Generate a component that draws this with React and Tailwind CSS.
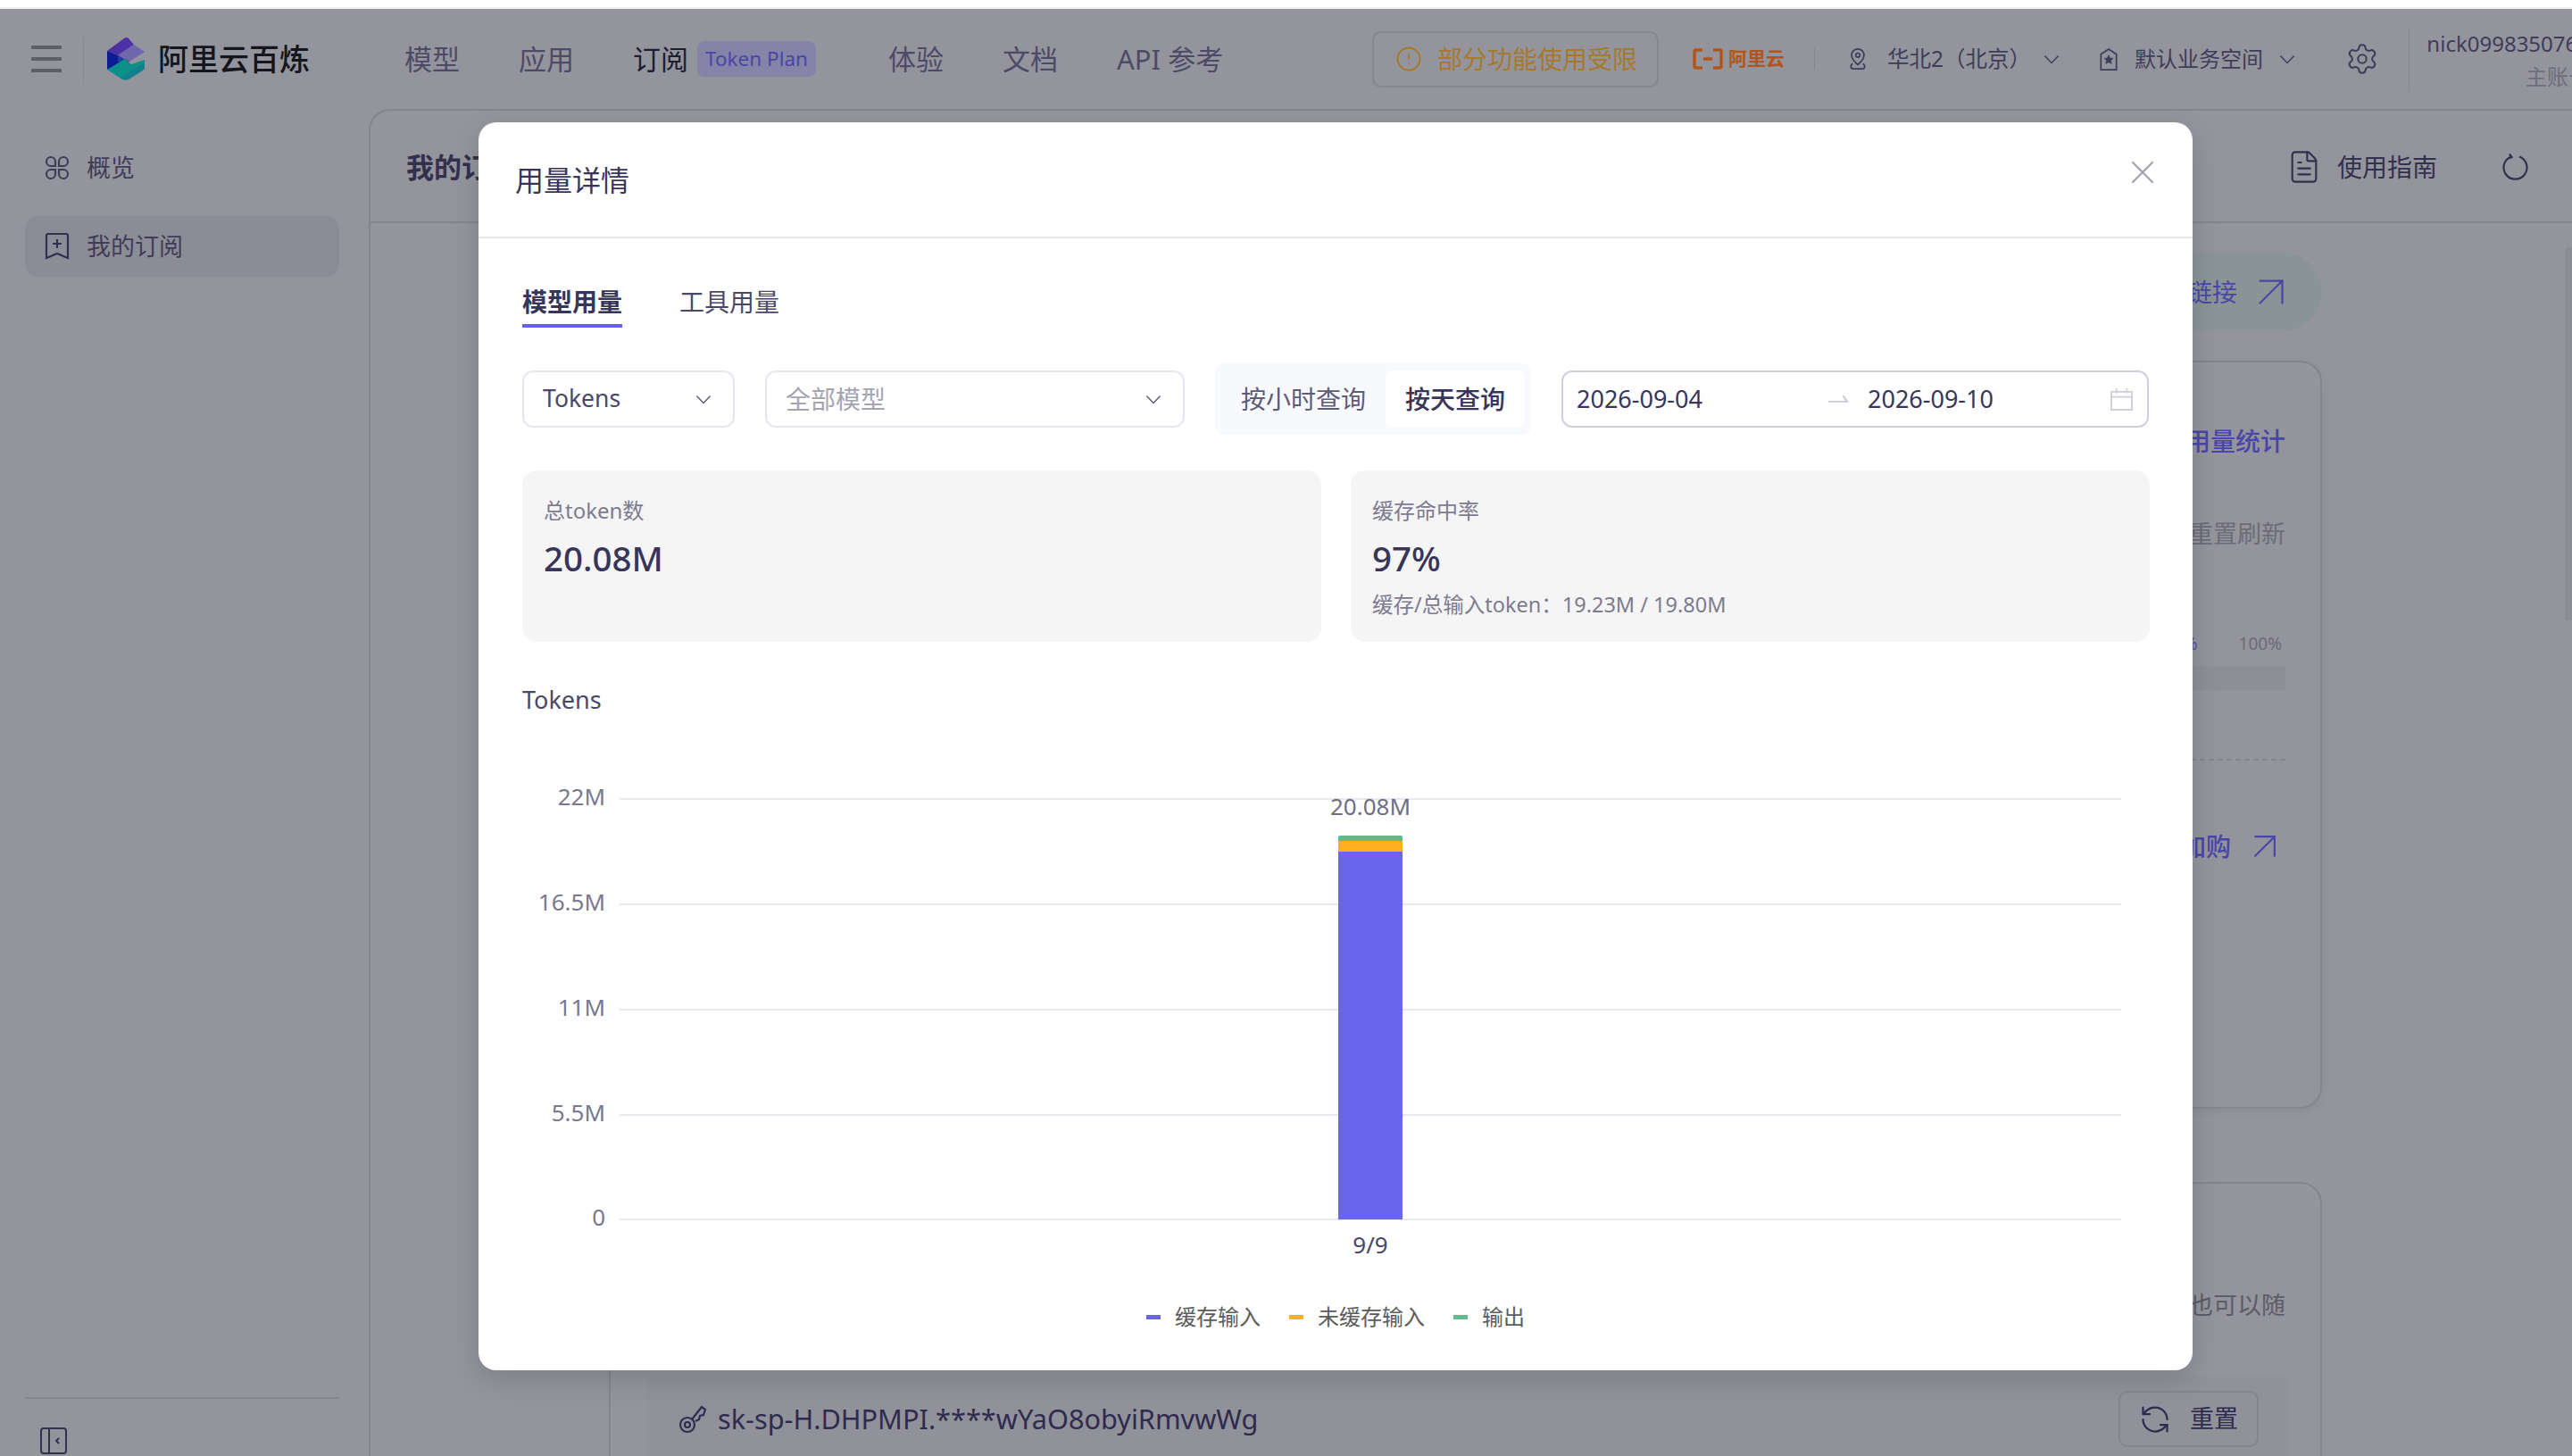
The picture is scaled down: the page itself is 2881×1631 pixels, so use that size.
import React from "react";
import { ArrowUpRight, CircleAlert, FileText, RefreshCcw, Settings, X } from "lucide-react";

const Chevron = ({ className }) => (
  <svg viewBox="0 0 20 12" fill="none" stroke="currentColor" strokeWidth="1.6" className={className}>
    <path d="M1.5 1.5 10 10.5l8.5-9" />
  </svg>
);

const LogoMark = () => (
  <svg viewBox="0 0 42 48" className="w-[42px] h-[48px] ml-[26px] shrink-0">
    <path d="M0 15 19 1c2-1.300 4-1.300 5 0l6 7-18 12z" fill="#4b31a3" />
    <path d="M12 20 30 8l12 8-17 11-7-3z" fill="#6f66ae" />
    <path d="M0 15l12 5 8 6-20 10z" fill="#0b1c94" />
    <path d="M12 20l13 7-5 3-8-3z" fill="#1f3fa0" />
    <path d="M0 36 20 24l7 6 15-5v9L22 47c-2 1-3 1-5 0z" fill="#0d8f8a" />
    <path d="M15 45 42 28v6c0 1-1 2-2 3L24 47c-3 1-6 0-9-2z" fill="#12808a" />
  </svg>
);

const OverviewIcon = () => (
  <svg viewBox="0 0 28 28" fill="none" stroke="#3f3c5a" strokeWidth="2.2" className="w-[28px] h-[28px] shrink-0">
    <path d="M12 12H7a5 5 0 1 1 5-5z" />
    <path d="M16 12h5a5 5 0 1 0-5-5z" />
    <path d="M12 16H7a5 5 0 1 0 5 5z" />
    <path d="M16 16h5a5 5 0 1 1-5 5z" />
  </svg>
);

const BookmarkIcon = () => (
  <svg viewBox="0 0 28 30" fill="none" stroke="#33304f" strokeWidth="2.2" className="w-[28px] h-[30px] shrink-0">
    <path d="M2 3a2 2 0 0 1 2-2h20a2 2 0 0 1 2 2v25l-12-5-12 5z" />
    <path d="M14 7v10M9 12h10" />
  </svg>
);

const CollapseIcon = () => (
  <svg viewBox="0 0 30 30" fill="none" stroke="#33304f" strokeWidth="2" className="w-[30px] h-[30px]">
    <rect x="1" y="1" width="28" height="28" rx="3" />
    <path d="M10 1v28" />
    <path d="M21 12l-3 3 3 3" />
  </svg>
);

const PinIcon = () => (
  <svg viewBox="0 0 22 28" fill="none" stroke="#3f3c5a" strokeWidth="1.8" className="w-[22px] h-[26px] shrink-0">
    <path d="M11 2a7.500 7.500 0 0 0-7.500 7.500C3.500 14 8 18.500 11 21c3-2.500 7.500-7 7.500-11.500A7.500 7.500 0 0 0 11 2z" />
    <circle cx="11" cy="9.500" r="2.500" />
    <path d="M5 20c-3 1-3.500 6 1 6h10c4.500 0 4-5 1-6" />
  </svg>
);

const SpaceIcon = () => (
  <svg viewBox="0 0 22 28" fill="none" stroke="#3f3c5a" strokeWidth="1.8" className="w-[22px] h-[27px] shrink-0">
    <path d="M11 2 2 8v18h18V8z" />
    <path d="m11 9 1.600 3.400 3.700.5-2.700 2.500.7 3.700-3.300-1.800-3.300 1.800.7-3.700-2.700-2.500 3.700-.5z" fill="#3f3c5a" strokeWidth="0.6" />
  </svg>
);

const CalendarIcon = () => (
  <svg viewBox="0 0 26 26" fill="none" stroke="#d0d0da" strokeWidth="2" className="w-[25px] h-[25px] shrink-0">
    <rect x="1" y="4" width="24" height="21" />
    <path d="M1 10h24M7 0v6M19 0v6" />
  </svg>
);

const RefreshIcon = () => (
  <svg viewBox="0 0 30 30" fill="none" stroke="#33304f" strokeWidth="2.200" className="ml-[73px] mr-[48px] w-[30px] h-[30px] shrink-0">
    <path d="M19 3.500a13 13 0 1 1-9 0" />
    <path d="M8 .5l2.500 3.500-4 1.500" />
  </svg>
);

const KeyIcon = () => (
  <svg viewBox="0 0 32 32" fill="none" stroke="#2e2b4e" strokeWidth="2.200" className="w-[32px] h-[32px] shrink-0">
    <circle cx="10" cy="22" r="8" />
    <circle cx="10" cy="22" r="3" />
    <path d="M15 16 26 2l4 3-2 6-4 1-1 4-4 2" />
  </svg>
);

const Select = ({ width, text, muted }) => (
  <div className={`flex items-center justify-between h-[64px] border-2 border-[#e6e6ee] rounded-[12px] pl-[21px] pr-[24px] shrink-0 ${width}`}>
    <span className={muted ? "text-[28px] text-[#a5a4b3]" : "text-[26.5px] text-[#4a4866]"}>{text}</span>
    <Chevron className="w-[18px] h-[11px] text-[#5d5b77]" />
  </div>
);

const StatCard = ({ label, value, note }) => (
  <div className="h-[192px] bg-[#f5f5f6] rounded-[16px] pl-[24px] pt-[28px]">
    <div className="text-[24px] leading-[34px] text-[#7d7b90]">{label}</div>
    <div className="text-[38.5px] leading-[54px] mt-[9px] font-medium text-[#38355a]">{value}</div>
    {note && <div className="text-[23.5px] leading-[34px] mt-[8px] text-[#7d7b90]">{note}</div>}
  </div>
);

const gridLines = [
  { y: 45, label: "22M" },
  { y: 163, label: "16.5M" },
  { y: 281, label: "11M" },
  { y: 399, label: "5.5M" },
  { y: 516, label: "0" },
];

const UsageChart = () => (
  <svg viewBox="0 0 1823 606" className="w-[1823px] h-[606px] mt-[46px] block">
    {gridLines.map((line) => (
      <g key={line.label}>
        <rect x="109" y={line.y - 1} width="1682" height="2" fill="#e8e8ee" />
        <text x="93" y={line.y} textAnchor="end" dominantBaseline="middle" className="text-[26px] fill-[#7a788e]">
          {line.label}
        </text>
      </g>
    ))}
    <path d="M914 92v-4a2 2 0 0 1 2-2h68a2 2 0 0 1 2 2v4z" fill="#62b98e" />
    <rect x="914" y="92" width="72" height="12" fill="#ffaf1f" />
    <rect x="914" y="104" width="72" height="412" fill="#6965ed" />
    <text x="950" y="56" textAnchor="middle" dominantBaseline="middle" className="text-[26px] fill-[#6f6d85]">
      20.08M
    </text>
    <text x="950" y="547" textAnchor="middle" dominantBaseline="middle" className="text-[26px] fill-[#4a4866]">
      9/9
    </text>
  </svg>
);

const LegendItem = ({ color, text }) => (
  <div className="flex items-center gap-[16px]">
    <span className={`w-[16px] h-[5px] ${color}`} />
    <span className="text-[24px] text-[#5c5c5c]">{text}</span>
  </div>
);

const UsageModal = () => (
  <div className="absolute left-[536px] top-[137px] w-[1920px] h-[1398px] bg-white rounded-[20px] shadow-[0_10px_30px_rgba(0,0,0,0.15)]">
    <div className="flex items-start justify-between h-[130px] border-b-2 border-[#e6e6ec] pl-[41px] pr-[34px]">
      <div className="text-[32px] leading-[44px] mt-[43px] text-[#38355a]">用量详情</div>
      <X className="w-[44px] h-[44px] mt-[34px] text-[#a0a0ae]" strokeWidth={1.2} />
    </div>
    <div className="pl-[49px] pr-[48px]">
      <div className="flex pt-[51px]">
        <div className="text-[28px] leading-[40px] font-bold text-[#38355a] pb-[5px] border-b-4 border-[#6560e8]">模型用量</div>
        <div className="text-[28px] leading-[40px] ml-[64px] text-[#4a4866]">工具用量</div>
      </div>
      <div className="flex items-center mt-[40px]">
        <Select width="w-[238px]" text="Tokens" />
        <div className="ml-[34px]">
          <Select width="w-[470px]" text="全部模型" muted />
        </div>
        <div className="flex items-center justify-between ml-[34px] w-[354px] h-[80px] bg-[#f8f9fd] rounded-[10px] pl-[29px] pr-[7px] shrink-0">
          <span className="text-[28px] text-[#5d5b77]">按小时查询</span>
          <span className="flex items-center justify-center w-[156px] h-[64px] bg-white rounded-[8px] text-[28px] font-medium text-[#38355a]">按天查询</span>
        </div>
        <div className="flex items-center ml-[34px] w-[658px] h-[64px] border-2 border-[#cdcfdc] rounded-[12px] pl-[15px] pr-[16px] shrink-0">
          <span className="text-[27px] text-[#38355a] w-[282px]">2026-09-04</span>
          <svg viewBox="0 0 24 10" fill="none" stroke="#c9c9d4" strokeWidth="2" className="w-[23px] h-[10px] shrink-0">
            <path d="M0 8h22l-5-7" />
          </svg>
          <span className="text-[27px] text-[#38355a] ml-[21px] flex-1">2026-09-10</span>
          <CalendarIcon />
        </div>
      </div>
      <div className="grid grid-cols-2 gap-[33px] mt-[40px]">
        <StatCard label="总token数" value="20.08M" />
        <StatCard label="缓存命中率" value="97%" note="缓存/总输入token：19.23M / 19.80M" />
      </div>
      <div className="text-[27px] leading-[40px] mt-[45px] text-[#4a4866]">Tokens</div>
      <UsageChart />
      <div className="flex items-center gap-[32px] pl-[699px] mt-[2px] h-[34px]">
        <LegendItem color="bg-[#6965ed]" text="缓存输入" />
        <LegendItem color="bg-[#ffaf1f]" text="未缓存输入" />
        <LegendItem color="bg-[#62b98e]" text="输出" />
      </div>
    </div>
  </div>
);

const TopBar = () => (
  <div className="flex items-center h-[112px] text-[#4d4a68]">
    <div className="flex flex-col gap-[9px] ml-[35px] w-[34px] shrink-0">
      <span className="h-[4px] bg-[#5e5e66]" />
      <span className="h-[4px] bg-[#5e5e66]" />
      <span className="h-[4px] bg-[#5e5e66]" />
    </div>
    <span className="ml-[24px] w-px h-[51px] bg-[#8a8a93] shrink-0" />
    <LogoMark />
    <div className="ml-[15px] w-[168px] text-[34px] font-medium text-[#15151c] whitespace-nowrap shrink-0">阿里云百炼</div>
    <div className="ml-[108px] w-[62px] text-[31px] shrink-0">模型</div>
    <div className="ml-[66px] w-[62px] text-[31px] shrink-0">应用</div>
    <div className="ml-[66px] w-[62px] text-[31px] text-[#1f1d33] shrink-0">订阅</div>
    <div className="flex items-center justify-center ml-[10px] w-[133px] h-[40px] rounded-[8px] bg-[#8583a8] text-[22.5px] text-[#4a46a8] shrink-0">Token Plan</div>
    <div className="ml-[81px] w-[62px] text-[31px] shrink-0">体验</div>
    <div className="ml-[66px] w-[62px] text-[31px] shrink-0">文档</div>
    <div className="ml-[66px] w-[120px] text-[31px] whitespace-nowrap shrink-0">API 参考</div>
    <div className="flex items-center ml-[166px] w-[321px] h-[63px] border-2 border-[#868690] rounded-[10px] pl-[24px] shrink-0">
      <CircleAlert className="w-[30px] h-[30px] text-[#a7781f]" strokeWidth={1.4} />
      <span className="ml-[17px] text-[28px] text-[#a6792e] whitespace-nowrap">部分功能使用受限</span>
    </div>
    <div className="flex items-center ml-[38px] w-[104px] shrink-0 text-[#b0561c]">
      <svg viewBox="0 0 34 24" fill="none" stroke="currentColor" strokeWidth="3.500" className="w-[34px] h-[24px] shrink-0">
        <path d="M11 2H4a2 2 0 0 0-2 2v16a2 2 0 0 0 2 2h7M23 2h7a2 2 0 0 1 2 2v16a2 2 0 0 1-2 2h-7M12 12h10" />
      </svg>
      <span className="ml-[6px] text-[21px] font-bold whitespace-nowrap">阿里云</span>
    </div>
    <span className="ml-[32px] w-px h-[24px] bg-[#85858f] shrink-0" />
    <div className="flex items-center ml-[37px] shrink-0 text-[#3f3c5a]">
      <PinIcon />
      <span className="ml-[22px] w-[175px] text-[24.5px] whitespace-nowrap">华北2（北京）</span>
      <Chevron className="w-[18px] h-[11px]" />
    </div>
    <div className="flex items-center ml-[44px] shrink-0 text-[#3f3c5a]">
      <SpaceIcon />
      <span className="ml-[18px] w-[162px] text-[24px] whitespace-nowrap">默认业务空间</span>
      <Chevron className="w-[18px] h-[11px]" />
    </div>
    <Settings className="ml-[56px] w-[38px] h-[38px] text-[#3f3c5a] shrink-0" strokeWidth={1.3} />
    <span className="ml-[33px] w-px h-[72px] bg-[#8a8a93] shrink-0" />
    <div className="flex flex-col items-end ml-[17px] w-[185px] shrink-0">
      <span className="text-[24px] leading-[34px] mt-[2px] text-[#3f3c5a]">nick0998350761</span>
      <span className="text-[24px] leading-[34px] mt-[3px] text-[#6e6d7c]">主账号</span>
    </div>
  </div>
);

const SideBar = () => (
  <div className="flex flex-col justify-between w-[413px] shrink-0 text-[#3f3c5a]">
    <div className="flex flex-col gap-[20px] pt-[32px] ml-[28px] mr-[33px]">
      <div className="flex items-center h-[68px] pl-[22px] gap-[19px]">
        <OverviewIcon />
        <span className="text-[27px]">概览</span>
      </div>
      <div className="flex items-center h-[68px] pl-[22px] gap-[19px] bg-[#8c8c97] rounded-[14px]">
        <BookmarkIcon />
        <span className="text-[27px]">我的订阅</span>
      </div>
    </div>
    <div className="ml-[28px] mr-[33px] border-t-2 border-[#85858f] pt-[32px] pl-[17px] pb-[2px]">
      <CollapseIcon />
    </div>
  </div>
);

const ContentPanel = () => (
  <div className="flex-1 min-w-0 flex flex-col border-l-2 border-t-2 border-[#85858f] rounded-tl-[24px] overflow-hidden">
    <div className="flex items-center h-[126px] border-b-2 border-[#85858f] pl-[40px] pt-[2px] shrink-0 text-[#33304f]">
      <span className="text-[31px] font-bold">我的订阅</span>
      <FileText className="ml-auto w-[40px] h-[40px]" strokeWidth={1.3} />
      <span className="ml-[17px] text-[28px]">使用指南</span>
      <RefreshIcon />
    </div>
    <div className="flex flex-col ml-[267px] mr-[280px] pt-[33px]">
      <div className="flex items-center justify-end h-[88px] bg-[#8a9496] rounded-full pr-[27px] text-[#4a46a8]">
        <span className="text-[28px]">打开链接</span>
        <ArrowUpRight className="ml-[8px] w-[60px] h-[60px]" strokeWidth={0.9} />
      </div>
      <div className="flex flex-col items-end h-[838px] mt-[33px] border-2 border-[#85858f] rounded-[24px] pr-[39px] pt-[68px] shadow-[0_4px_12px_rgba(0,0,0,0.05)]">
        <span className="text-[28px] leading-[40px] font-medium text-[#4a46a8]">用量统计</span>
        <span className="text-[27px] leading-[40px] mt-[64px] text-[#6c6c78]">每周重置刷新</span>
        <div className="flex items-center gap-[46px] mt-[89px] mr-[4px] text-[19px] leading-[28px]">
          <span className="text-[#5550b0]">96%</span>
          <span className="text-[#6c6c78]">100%</span>
        </div>
        <span className="w-full h-[27px] mt-[11px] bg-[#8e8e97]" />
        <span className="w-full mt-[77px] border-t-2 border-dashed border-[#85858f]" />
        <div className="flex items-center mt-[76px] -mr-[3px] text-[#4a46a8]">
          <span className="text-[28px] leading-[40px] font-medium">加购</span>
          <ArrowUpRight className="ml-[12px] -my-[6px] w-[52px] h-[52px]" strokeWidth={1} />
        </div>
      </div>
      <div className="h-[400px] mt-[82px] border-2 border-[#85858f] rounded-[24px] pt-[116px] shrink-0">
        <div className="text-right text-[27px] leading-[40px] pr-[39px] text-[#5c5c68]">你也可以随</div>
        <div className="flex items-start justify-between ml-[40px] mr-[35px] mt-[59px] h-[100px] bg-[#91919a] rounded-[12px] pl-[36px] pr-[34px] pt-[17px]">
          <div className="flex items-center text-[#2e2b4e] h-[63px]">
            <KeyIcon />
            <span className="ml-[12px] text-[30.7px] whitespace-nowrap">sk-sp-H.DHPMPI.****wYaO8obyiRmvwWg</span>
          </div>
          <div className="flex items-center justify-center gap-[21px] w-[157px] h-[63px] border-2 border-[#85858f] rounded-[10px] text-[#2e2b4e]">
            <RefreshCcw className="w-[36px] h-[36px]" strokeWidth={1.5} />
            <span className="text-[27px]">重置</span>
          </div>
        </div>
      </div>
    </div>
    <div className="absolute right-0 top-[277px] w-[8px] h-[418px] bg-[#8c8c95] rounded-l-[4px]" />
  </div>
);

export default function App() {
  return (
    <div className="relative w-[2881px] h-[1631px] overflow-hidden bg-white font-['Noto_Sans','Noto_Sans_CJK_SC',sans-serif]">
      <div className="h-[10px] border-b-2 border-[#eeeeee]" />
      <div className="flex flex-col h-[1621px] bg-[#94949c]">
        <TopBar />
        <div className="flex flex-1 min-h-0">
          <SideBar />
          <ContentPanel />
        </div>
      </div>
      <UsageModal />
    </div>
  );
}
